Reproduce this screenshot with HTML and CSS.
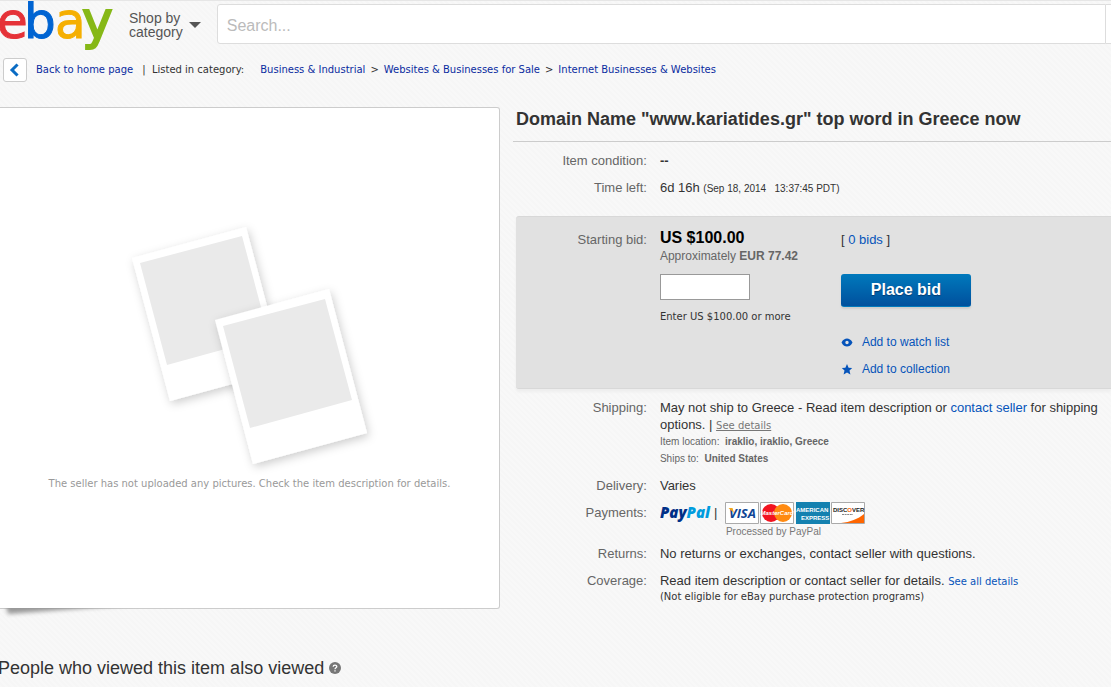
FILE: index.html
```html
<!DOCTYPE html>
<html lang="en">
<head>
<meta charset="utf-8">
<title>Domain Name "www.kariatides.gr" top word in Greece now | eBay</title>
<link rel="stylesheet" href="styles.css">
</head>
<body>
<header class="header">
  <a class="logo" href="#" aria-label="eBay home">
    <svg width="116" height="50" viewBox="0 0 116 50" aria-hidden="true">
      <g class="logo-letters">
        <text x="-3" y="37" fill="#e53238" stroke="#e53238">e</text>
        <text x="55" y="37" fill="#f5af02" stroke="#f5af02">a</text>
        <text x="24" y="37" fill="#0064d2" stroke="#0064d2">b</text>
        <text class="logo-y" x="82" y="37" fill="#86b817" stroke="#86b817">y</text>
      </g>
    </svg>
  </a>
  <button class="shop" type="button"><span>Shop by<br>category</span>
    <svg width="12" height="6" viewBox="0 0 12 6" aria-hidden="true"><path d="M0 0h12L6 6z" fill="#555"/></svg>
  </button>
  <form class="search" role="search">
    <input class="search-input" type="text" placeholder="Search..." aria-label="Search">
    <span class="search-scope"></span>
  </form>
</header>

<nav class="crumbs" aria-label="Breadcrumb">
  <a class="back" href="#" aria-label="Back">
    <svg width="22" height="22" viewBox="0 0 22 22" aria-hidden="true"><path d="M12.500 6.500L8 11l4.500 4.500" fill="none" stroke="#0a6cc4" stroke-width="3" stroke-linecap="square"/></svg>
  </a>
  <a class="home" href="#">Back to home page</a>
  <span class="listed">| &nbsp;Listed in category:</span>
  <a href="#">Business &amp; Industrial</a><span class="sep">&gt;</span>
  <a href="#">Websites &amp; Businesses for Sale</a><span class="sep">&gt;</span>
  <a href="#">Internet Businesses &amp; Websites</a>
</nav>

<main class="main">
  <section class="gallery">
    <svg class="photos" width="280" height="266" viewBox="0 0 280 266" aria-hidden="true">
      <defs>
        <filter id="soft" x="-20%" y="-20%" width="140%" height="140%">
          <feDropShadow dx="2" dy="3" stdDeviation="5" flood-color="#000" flood-opacity=".2"/>
        </filter>
      </defs>
      <g filter="url(#soft)"><path d="M22 48L136 17L174 160L60 191z" fill="#fff"/></g>
      <path d="M30 53L132 26L159 127L57 155z" fill="#eaeaea"/>
      <g filter="url(#soft)"><path d="M105 110L219 79L257 223L143 254z" fill="#fff"/></g>
      <path d="M113 116L215 89L242 190L140 218z" fill="#eaeaea"/>
    </svg>
    <p class="gallery-note">The seller has not uploaded any pictures. Check the item description for details.</p>
    <svg class="curl" width="140" height="14" viewBox="0 0 140 14" aria-hidden="true">
      <defs>
        <filter id="curl" x="-10%" y="-60%" width="120%" height="220%"><feGaussianBlur stdDeviation="2"/></filter>
      </defs>
      <path d="M5 -6H140V-4L8 6z" fill="#999" filter="url(#curl)"/>
    </svg>
  </section>

  <section class="details">
    <h1 class="title">Domain Name "www.kariatides.gr" top word in Greece now</h1>
    <dl class="rows">
      <div class="row"><dt>Item condition:</dt><dd><b>--</b></dd></div>
      <div class="row"><dt>Time left:</dt><dd>6d 16h <span class="date">(Sep 18, 2014 &nbsp; 13:37:45 PDT)</span></dd></div>
    </dl>

    <form class="bid">
      <label class="bid-label" for="bid">Starting bid:</label>
      <div class="bid-price">
        <strong class="price">US $100.00</strong>
        <span class="approx">Approximately <b>EUR 77.42</b></span>
        <input class="bid-input" id="bid" type="text">
        <span class="hint">Enter US $100.00 or more</span>
      </div>
      <div class="bid-actions">
        <span class="count">[ <a href="#">0 bids</a> ]</span>
        <button class="place" type="button">Place bid</button>
        <a class="action" href="#">
          <svg width="12" height="12" viewBox="0 0 12 12" aria-hidden="true"><path fill-rule="evenodd" d="M0.500 5.500C2 2.500 4 1.500 6 1.500S10 2.500 11.500 5.500C10 8.500 8 9.500 6 9.500S2 8.500 0.500 5.500zM6 3.800a1.700 1.700 0 1 0 0 3.400a1.700 1.700 0 1 0 0-3.400z" fill="#0654ba"/></svg>
          Add to watch list</a>
        <a class="action" href="#">
          <svg width="12" height="12" viewBox="0 0 12 12" aria-hidden="true"><path d="M6 0L7.600 3.700L11.200 4L8.500 6.600L9.400 10.500L6 8.400L2.600 10.500L3.500 6.600L0.800 4L4.400 3.700z" fill="#0654ba"/></svg>
          Add to collection</a>
      </div>
    </form>

    <dl class="rows">
      <div class="row"><dt>Shipping:</dt><dd>May not ship to Greece - Read item description or <a href="#">contact seller</a> for shipping options. | <a class="see" href="#">See details</a>
        <div class="meta">Item location: &nbsp;<b>iraklio, iraklio, Greece</b></div>
        <div class="meta">Ships to: &nbsp;<b>United States</b></div></dd></div>
      <div class="row"><dt>Delivery:</dt><dd>Varies</dd></div>
      <div class="row pay"><dt>Payments:</dt><dd>
        <div class="methods">
          <svg width="53" height="22" viewBox="0 0 53 22" role="img" aria-label="PayPal"><text class="paypal" x="0" y="16"><tspan fill="#003087">Pay</tspan><tspan fill="#009cde">Pal</tspan></text></svg>
          <span class="bar">|</span>
          <svg class="cards" width="140" height="22" viewBox="0 0 140 22" role="img" aria-label="Visa, MasterCard, American Express, Discover">
            <g fill="#fff" stroke="#aaa"><path d="M.5 .5h33v21h-33zM35.500 .5h33v21h-33zM106.500 .5h33v21h-33z"/></g>
            <text class="visa" x="4" y="16" fill="#0e4595">VISA</text>
            <path d="M3.500 6h4l1.500 5z" fill="#f2a71b"/>
            <circle cx="46" cy="11" r="9" fill="#f2131f"/><circle cx="58" cy="11" r="9" fill="#ff8a10"/>
            <text class="mc" x="52" y="13" text-anchor="middle" fill="#fff">MasterCard</text>
            <path d="M71 0h34v22H71z" fill="#1481b0"/>
            <text class="amex" x="71" y="10" fill="#fff">AMERICAN</text>
            <text class="amex" x="76" y="18" fill="#fff">EXPRESS</text>
            <path d="M139 12v9h-23C125 20 133 17 139 12z" fill="#f60"/>
            <text class="disc" x="108" y="10" fill="#222">DISC<tspan fill="#f60">O</tspan>VER</text>
            <path d="M117 12.500h11" stroke="#888" stroke-width="1" stroke-dasharray="2 .6"/>
          </svg>
        </div>
        <div class="processed">Processed by PayPal</div></dd></div>
      <div class="row returns"><dt>Returns:</dt><dd>No returns or exchanges, contact seller with questions.</dd></div>
      <div class="row"><dt>Coverage:</dt><dd>Read item description or contact seller for details. <a class="see-all" href="#">See all details</a>
        <div class="note">(Not eligible for eBay purchase protection programs)</div></dd></div>
    </dl>
  </section>
</main>

<section class="also">
  <h2>People who viewed this item also viewed</h2>
  <svg width="12" height="12" viewBox="0 0 12 12" role="img" aria-label="Help"><circle cx="6" cy="6" r="6" fill="#777"/><path d="M4.200 4.700C4.200 2.500 7.800 2.500 7.800 4.600C7.800 5.800 6 5.800 6 7.200M6 8.300v1.300" fill="none" stroke="#fff" stroke-width="1.300"/></svg>
</section>
</body>
</html>
```
FILE: styles.css
```css
* { box-sizing: border-box; }

body {
  margin: 0;
  border-top: 1px solid #e6e6e6;
  background: repeating-linear-gradient(45deg, #f8f8f8 0 2px, #f6f6f6 2px 4px);
  color: #333;
  font: 13px/17px "Liberation Sans", Arial, sans-serif;
  overflow-x: hidden;
}

a { color: #0654ba; text-decoration: none; }
svg { display: block; flex: none; }
dl, dd, h1, h2, p { margin: 0; }

.header { display: flex; align-items: flex-start; height: 50px; }
.logo-letters { font: 50px "DejaVu Sans", Verdana, sans-serif; stroke-width: 1; }
.logo-y { font-size: 52px; stroke-width: 2; }

.shop {
  display: flex;
  align-items: center;
  gap: 6px;
  margin: 10px 16px 0 13px;
  padding: 0;
  border: 0;
  background: none;
  color: #555;
  font: 14px/14px "Liberation Sans", Arial, sans-serif;
  text-align: left;
}

.search { display: flex; flex: 1; height: 40px; margin-top: 3px; }
.search-input {
  flex: 1;
  min-width: 0;
  padding: 3px 9px 0;
  border: 1px solid #ddd;
  border-radius: 3px 0 0 3px;
  background: #fff;
  font: 16px/20px "Liberation Sans", Arial, sans-serif;
}
.search-input::placeholder { color: #bbb; }
.search-scope { width: 5px; border: solid #ddd; border-width: 1px 0; background: #fff; }

.crumbs {
  display: flex;
  align-items: center;
  height: 38px;
  padding-left: 3px;
  font: 10px/16px "DejaVu Sans", Verdana, sans-serif;
}
.crumbs a { color: #0a2ca0; }
.back { padding: 0; border: 1px solid #ccc; border-radius: 3px; background: #fff; }
.home { margin: 0 9px; }
.listed { margin-right: 16px; }
.sep { margin: 0 5px; }

.main { display: flex; align-items: flex-start; gap: 13px; margin-top: 18px; }

.gallery {
  position: relative;
  flex: 0 0 45%;
  height: 502px;
  padding-top: 102px;
  border: solid #ccc;
  border-width: 1px 1px 1px 0;
  border-radius: 0 3px 3px 0;
  background: #fff;
}
.photos { margin-left: 110px; }
.gallery-note {
  color: #999;
  font: 10px/16px "DejaVu Sans", Verdana, sans-serif;
  text-align: center;
}
.curl { position: absolute; left: 0; top: 100%; }

.details { flex: 1; min-width: 0; }
.title {
  margin-bottom: 10px;
  padding: 1px 3px 10px;
  border-bottom: 1px solid #ccc;
  font-size: 18px;
  line-height: 23px;
}
.rows { display: grid; gap: 10px; padding-left: 3px; }
.row { display: grid; grid-template-columns: 131px 1fr; gap: 13px; }
.row dt, .bid-label { color: #666; text-align: right; }
.date { font-size: 10px; }

.bid {
  display: grid;
  grid-template-columns: 131px 168px 1fr;
  column-gap: 13px;
  margin: 19px 0 10px 3px;
  padding: 11px 0 10px;
  border: 1px solid #d8d8d8;
  border-width: 1px 0;
  border-radius: 3px 0 0 3px;
  background: #e1e1e1;
  box-shadow: 0 3px 3px #eee;
}
.bid-label { margin-top: 3px; }
.bid-price, .bid-actions { display: flex; flex-direction: column; align-items: flex-start; }
.price { color: #000; font-size: 16px; line-height: 20px; }
.approx { color: #666; font-size: 12px; line-height: 16px; }
.bid-input { width: 90px; height: 26px; margin: 10px 0 9px; border: 1px solid #999; background: #fff; }
.hint, .note { font: 10px/16px "DejaVu Sans", Verdana, sans-serif; }
.count { margin: 3px 0 26px; }
.place {
  width: 130px;
  height: 33px;
  margin-bottom: 27px;
  padding: 0;
  border: 0;
  border-bottom: 1px solid #0079bc;
  border-radius: 3px;
  background: linear-gradient(#0079bc, #00509d);
  box-shadow: 0 2px 2px #ccc;
  color: #fff;
  font: bold 16px/20px "Liberation Sans", Arial, sans-serif;
  text-shadow: 0 1px 1px #003a70;
}
.action { display: flex; align-items: center; gap: 9px; font-size: 12px; line-height: 17px; }
.action + .action { margin-top: 10px; }

.see, .see-all { font: 10px/10px "DejaVu Sans", Verdana, sans-serif; }
.see { color: #777; text-decoration: underline; }
.meta { color: #666; font-size: 10px; }
.pay { margin-top: -2px; }
.pay dt { line-height: 22px; }
.methods { display: flex; }
.bar { margin: 0 8px 0 1px; line-height: 22px; }
.processed { padding-left: 66px; color: #777; font-size: 10px; line-height: 15px; }
.returns { margin-top: -4px; }

.paypal { font: italic 800 15px "Open Sans", sans-serif; }
.visa { font: italic bold 13px "Open Sans", sans-serif; }
.mc { font: italic bold 6px "Liberation Sans", sans-serif; }
.amex { font: bold 6px "Liberation Sans", sans-serif; }
.disc { font: bold 6px "Liberation Sans", sans-serif; }

.also { display: flex; align-items: center; gap: 5px; margin: 47px 0 0 -2px; }
.also h2 { font-size: 18px; font-weight: normal; line-height: 24px; }
```
